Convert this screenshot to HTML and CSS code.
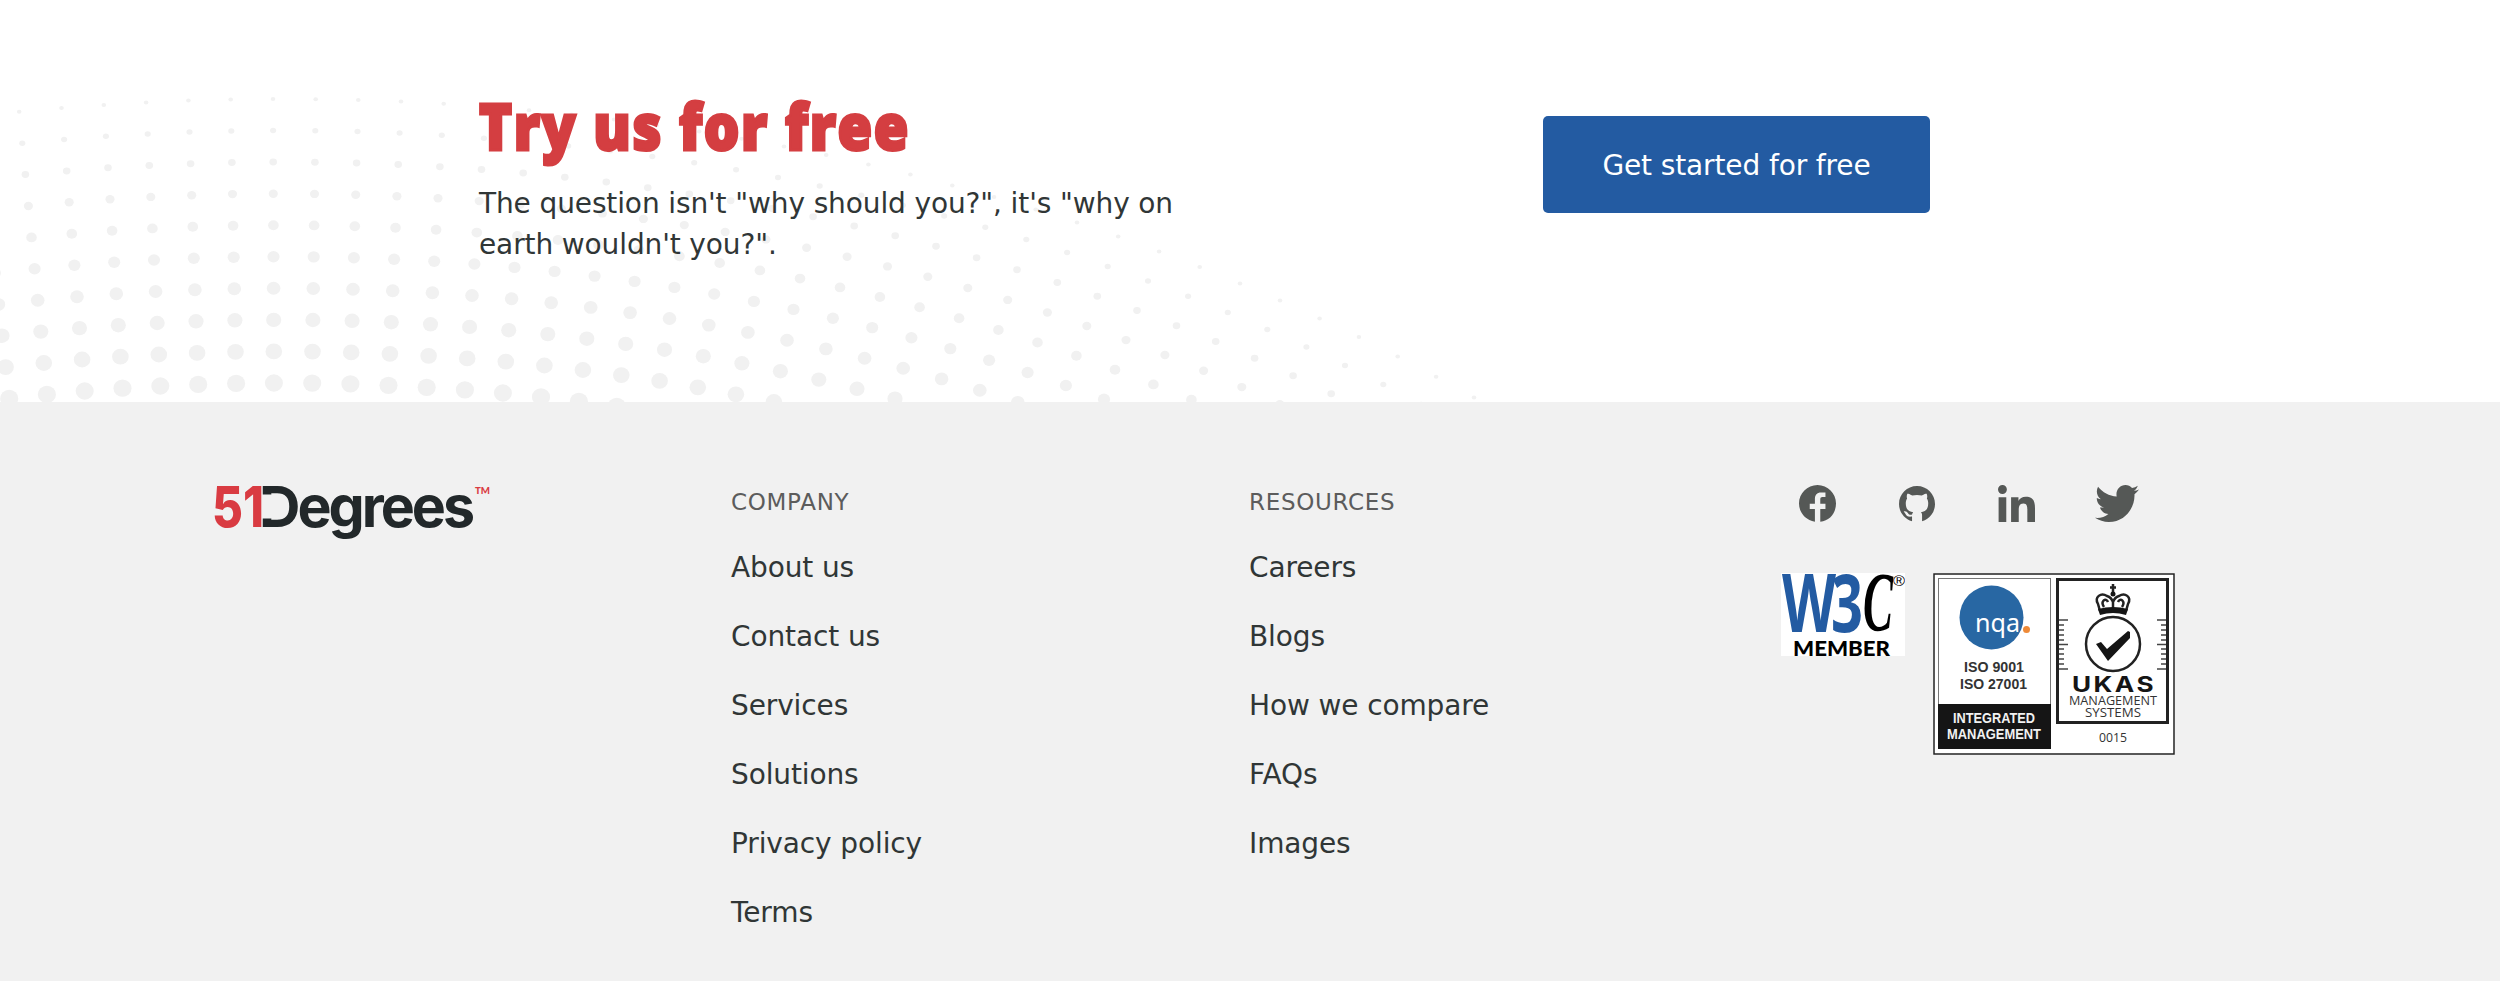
FILE: index.html
```
<!DOCTYPE html>
<html lang="en">
<head>
	<meta charset="UTF-8">
	<title>51Degrees</title>
	<link rel="stylesheet" href="styles.css">
</head>
<body>
	<section class="cta">
		<svg class="dots" width="1500" height="402" viewBox="0 0 1500 402"></svg>
		<div class="cta-text">
			<h2 class="title">Try us for free</h2>
			<p class="lead">The question isn't "why should you?", it's "why on earth wouldn't you?".</p>
		</div>
		<a class="btn" href="#"><span class="btn-label">Get started for free</span></a>
	</section>

	<footer class="footer">
		<div class="col">
			<svg class="logo" width="290" height="60" viewBox="0 0 290 60">
				<text class="logo-name" x="46" y="45" textLength="213" lengthAdjust="spacingAndGlyphs">Degrees</text>
				<rect class="logo-cut" x="47" y="12.500" width="14" height="24"/>
				<text class="logo-num" x="-1" y="45" textLength="52" lengthAdjust="spacingAndGlyphs">51</text>
				<text class="logo-tm" x="262" y="12" textLength="15" lengthAdjust="spacingAndGlyphs">TM</text>
			</svg>
		</div>
		<div class="col">
			<h3 class="col-title">COMPANY</h3>
			<ul class="links">
				<li><a href="#">About us</a></li>
				<li><a href="#">Contact us</a></li>
				<li><a href="#">Services</a></li>
				<li><a href="#">Solutions</a></li>
				<li><a href="#">Privacy policy</a></li>
				<li><a href="#">Terms</a></li>
			</ul>
		</div>
		<div class="col">
			<h3 class="col-title">RESOURCES</h3>
			<ul class="links">
				<li><a href="#">Careers</a></li>
				<li><a href="#">Blogs</a></li>
				<li><a href="#">How we compare</a></li>
				<li><a href="#">FAQs</a></li>
				<li><a href="#">Images</a></li>
			</ul>
		</div>
		<div class="col">
			<div class="social">
				<svg width="37" height="37" viewBox="2 2 20 20"><path d="M22 12c0-5.52-4.48-10-10-10S2 6.48 2 12c0 4.84 3.44 8.87 8.6 9.9V15H7.8v-2.9h2.8V9.5C10.600 7.3 11.700 6 13.900 6h2.400v2.500h-1.600c-.8 0-1.200.4-1.200 1.200v2.400h2.800V15h-2.800v6.900c5.05-.5 8.500-4.76 8.500-9.900z"/></svg>
				<svg width="36" height="36" viewBox="0 0 16 16"><path d="M8 0C3.58 0 0 3.58 0 8c0 3.54 2.29 6.53 5.800 7.700V13.600c-1.900.3-2.500-.4-2.900-1.200-.2-.4-.5-.8-.8-1.100.9-.3 1.500.2 1.900.8.500.7 1 .8 1.800.6.07-.52.28-.87.51-1.070-1.780-.2-3.300-.89-3.300-3.950 0-.87.2-1.590.6-2.150-.08-.2-.36-1.020.08-2.120 0 0 .67-.21 2.200.82.64-.18 1.400-.27 2.110-.27s1.470.09 2.110.27c1.530-1.040 2.200-.82 2.200-.82.44 1.100.16 1.920.08 2.120.4.56.6 1.270.6 2.150 0 3.070-1.500 3.750-3.280 3.950.4.300.54.73.54 1.480v2.600A8.010 8.010 0 0 0 16 8c0-4.420-3.580-8-8-8z"/></svg>
				<svg width="37" height="37" viewBox="0 32 448 448"><path d="M100.280 480H7.400V180.900h92.880zM53.790 140.100C24.090 140.100 0 115.500 0 85.800a53.790 53.790 0 0 1 107.580 0c0 29.700-24.100 54.300-53.790 54.300zM447.900 480h-92.680V334.400c0-34.700-.7-79.200-48.290-79.200-48.290 0-55.690 37.700-55.690 76.700V480h-92.780V180.900h89.080v40.800h1.300c12.400-23.500 42.690-48.300 87.880-48.300 94 0 111.280 61.900 111.280 142.300V480z"/></svg>
				<svg class="bird" width="44" height="37" viewBox="0 48 512 416" preserveAspectRatio="none"><path d="M459.370 151.716c.325 4.548.325 9.097.325 13.645 0 138.720-105.583 298.558-298.558 298.558-59.452 0-114.680-17.219-161.137-47.106 8.447.974 16.568 1.299 25.340 1.299 49.055 0 94.213-16.568 130.274-44.832-46.132-.975-84.792-31.188-98.112-72.772 6.498.974 12.995 1.624 19.818 1.624 9.421 0 18.843-1.300 27.614-3.573-48.081-9.747-84.143-51.980-84.143-102.985v-1.299c13.969 7.797 30.214 12.670 47.431 13.319-28.264-18.843-46.781-51.005-46.781-87.391 0-19.492 5.197-37.360 14.294-52.954 51.655 63.675 129.300 105.258 216.365 109.807-1.624-7.797-2.599-15.918-2.599-24.040 0-57.828 46.782-104.934 104.934-104.934 30.213 0 57.502 12.670 76.670 33.137 23.715-4.548 46.456-13.320 66.599-25.340-7.798 24.366-24.366 44.833-46.132 57.827 21.117-2.273 41.584-8.122 60.426-16.243-14.292 20.791-32.161 39.308-52.628 54.253z"/></svg>
			</div>
			<div class="badges">
				<svg class="w3c" width="124" height="83" viewBox="0 0 124 83">
					<text class="w3c-blue" x="1" y="59" textLength="54" lengthAdjust="spacingAndGlyphs">W</text>
					<text class="w3c-blue" x="50" y="59" textLength="32" lengthAdjust="spacingAndGlyphs">3</text>
					<text class="w3c-black" x="82" y="58" textLength="30" lengthAdjust="spacingAndGlyphs">C</text>
					<text class="w3c-reg" x="112" y="13" textLength="12" lengthAdjust="spacingAndGlyphs">®</text>
					<text class="w3c-member" x="12" y="82.500" textLength="97" lengthAdjust="spacingAndGlyphs">MEMBER</text>
				</svg>
				<svg class="iso" width="242" height="182" viewBox="0 0 242 182">
					<rect class="frame" x="1" y="1" width="240" height="180"/>
					<rect class="frame-light" x="5.500" y="5.500" width="112" height="170"/>
					<circle class="nqa-ball" cx="58.500" cy="44.500" r="32"/>
					<text class="nqa" x="42" y="59" textLength="45" lengthAdjust="spacingAndGlyphs">nqa</text>
					<circle class="nqa-dot" cx="93.500" cy="56.500" r="3.500"/>
					<text class="iso-text" x="31" y="99" textLength="60" lengthAdjust="spacingAndGlyphs">ISO 9001</text>
					<text class="iso-text" x="27" y="116" textLength="67" lengthAdjust="spacingAndGlyphs">ISO 27001</text>
					<rect class="ink" x="5" y="131" width="113" height="45"/>
					<text class="iso-white" x="20" y="150" textLength="82" lengthAdjust="spacingAndGlyphs">INTEGRATED</text>
					<text class="iso-white" x="14" y="166" textLength="94" lengthAdjust="spacingAndGlyphs">MANAGEMENT</text>
					<rect class="ukas-frame" x="124.500" y="6.500" width="110" height="143"/>
					<path class="ticks" d="M126 47h9M126 52h5M126 57h5M126 62h5M126 67h5M126 71.500h9M126 76h5M126 81h5M126 86h5M126 91h5M126 96h9M233 47h-9M233 52h-5M233 57h-5M233 62h-5M233 67h-5M233 71.500h-9M233 76h-5M233 81h-5M233 86h-5M233 91h-5M233 96h-9"/>
					<path class="crown" d="M167 38l-2-7c-4-7 3-12 9-8 3 1 5 3 6 6 1-3 3-5 6-6 6-4 13 1 9 8l-2 7M171 34c-4-6 2-10 4-5M189 34c4-6-2-10-4-5M180 28v10M180 11v11M177 14.500h6"/>
					<circle class="ink" cx="180" cy="21" r="2.500"/>
					<path class="ink" d="M165 36q15-4 30 0l-2 6q-13-4-26 0z"/>
					<circle class="ring" cx="180" cy="71" r="27"/>
					<path class="ink" d="M163 71l5-2 6 7 21-18 2 1v6L175 88z"/>
					<text class="ukas" x="139" y="119" textLength="84" lengthAdjust="spacingAndGlyphs">UKAS</text>
					<text class="ukas-small" x="136" y="132" textLength="88" lengthAdjust="spacingAndGlyphs">MANAGEMENT</text>
					<text class="ukas-small" x="152" y="144" textLength="56" lengthAdjust="spacingAndGlyphs">SYSTEMS</text>
					<text class="ukas-small" x="166" y="169" textLength="28" lengthAdjust="spacingAndGlyphs">0015</text>
				</svg>
			</div>
		</div>
	</footer>
	<script src="script.js"></script>
</body>
</html>
```

FILE: styles.css
```
*{
	box-sizing:border-box;
	margin:0;
	padding:0;
}
body{
	font-family:"DejaVu Sans", sans-serif;
	font-size:28px;
	letter-spacing:-.12px;
	color:#303636;
	background-color:#fff;
}
a{
	color:inherit;
	text-decoration:none;
}
svg{
	display:block;
	flex-shrink:0;
	letter-spacing:0;
}
/* call to action */
.cta{
	position:relative;
	height:402px;
	display:flex;
	align-items:flex-start;
	padding:88px 479px 0;
}
.dots{
	position:absolute;
	left:0;
	top:0;
	fill:#f1f1f1;
}
.cta-text{
	position:relative;
	width:1064px;
}
.title{
	font-family:"Open Sans", sans-serif;
	font-size:64px;
	font-weight:800;
	line-height:76px;
	letter-spacing:1.8px;
	color:#d43e41;
	white-space:nowrap;
	-webkit-text-stroke:3px #d43e41;
	transform:scaleX(.875);
	transform-origin:left;
}
.lead{
	width:720px;
	margin-top:19px;
	line-height:41px;
}
.btn{
	width:387px;
	height:97px;
	margin-top:28px;
	padding-top:2px;
	display:flex;
	align-items:center;
	justify-content:center;
	border-radius:5px;
	background-color:#235ba2;
	color:#fff;
}
/* footer */
.footer{
	height:579px;
	padding:81px 213px 0;
	display:grid;
	grid-template-columns:repeat(4, 518px);
	background-color:#f1f1f1;
}
.col-title{
	font-size:23px;
	font-weight:400;
	line-height:38px;
	letter-spacing:.7px;
	color:#5c5c5c;
}
.links{
	list-style:none;
	margin-top:12px;
}
.links li{
	line-height:69px;
}
.logo{
	margin-top:-1px;
	overflow:visible;
}
.logo-num,.logo-name{
	font-family:Inter, sans-serif;
	font-size:57px;
	font-weight:800;
}
.logo-name{
	font-weight:700;
	letter-spacing:-3px;
}
.logo-num,.logo-tm{
	fill:#d93b42;
}
.logo-name{
	fill:#22282a;
}
.logo-cut{
	fill:#f1f1f1;
}
.logo-tm{
	font-family:Lato, sans-serif;
	font-size:10px;
	font-weight:900;
}
.social{
	display:flex;
	align-items:center;
	gap:63px;
	padding:2px 0 0 32px;
	fill:#555856;
}
.bird{
	margin-left:-3px;
}
.badges{
	display:flex;
	align-items:flex-start;
	gap:28px;
	padding:51px 0 0 14px;
}
.w3c{
	background-color:#fff;
}
.w3c-blue{
	font-family:"Open Sans", sans-serif;
	font-size:80px;
	font-weight:700;
	fill:#235ba2;
}
.w3c-black{
	font-family:"Liberation Serif", serif;
	font-size:84px;
	font-weight:700;
	font-style:italic;
	fill:#000;
}
.w3c-reg{
	font-family:"Liberation Sans", sans-serif;
	font-size:15px;
}
.w3c-member{
	font-family:Lato, sans-serif;
	font-size:21px;
	font-weight:900;
}
.iso{
	background-color:#fff;
	font-family:"Liberation Sans", sans-serif;
	fill:#151515;
}
.frame,.frame-light,.ukas-frame,.ring,.ticks,.crown{
	fill:none;
	stroke:#222;
}
.frame{
	stroke-width:1.5;
}
.frame-light{
	stroke:#777;
}
.ukas-frame{
	stroke-width:3;
}
.ring{
	stroke-width:2.5;
}
.ticks{
	stroke:#444;
	stroke-width:1.5;
}
.crown{
	stroke-width:2.5;
}
.ink{
	fill:#151515;
}
.nqa-ball{
	fill:#2867a3;
}
.nqa-dot{
	fill:#ee8a38;
}
.nqa{
	font-family:"Noto Sans", sans-serif;
	font-size:26px;
	fill:#fff;
}
.iso-text,.iso-white{
	font-size:15px;
	font-weight:700;
	fill:#333;
}
.iso-white{
	font-size:14px;
	fill:#f1f1f1;
}
.ukas{
	font-family:Inter, sans-serif;
	font-size:21px;
	font-weight:700;
	letter-spacing:2px;
}
.ukas-small{
	font-family:"Open Sans", sans-serif;
	font-size:13px;
	fill:#333;
}
```

FILE: script.js
```
var dots = document.querySelector('.dots');
var html = '';
// every column starts on the outer arc and runs down along its normal
for(var j = -9; j <= 30; j++){
	var x = j < 0 ? 273 + 42.3*j : 273 + 42.67*j - 0.0000515*Math.pow(j, 4);
	var d = x - 282;
	var y = 99 + 0.000184*d*d*(1 + 0.0000001*d*d);
	var angle = Math.atan(0.000368*d*(1 + 0.0000002*d*d));
	for(var r = 0; r < 10; r++){
		var cx = x - r*31.55*Math.sin(angle);
		var cy = y + r*31.55*Math.cos(angle);
		html += '<ellipse cx="'+cx.toFixed(1)+'" cy="'+cy.toFixed(1)+'" rx="'+(2.3 + r*0.75)+'" ry="'+(2 + r*0.74)+'"/>';
	}
}
dots.innerHTML = html;
```
